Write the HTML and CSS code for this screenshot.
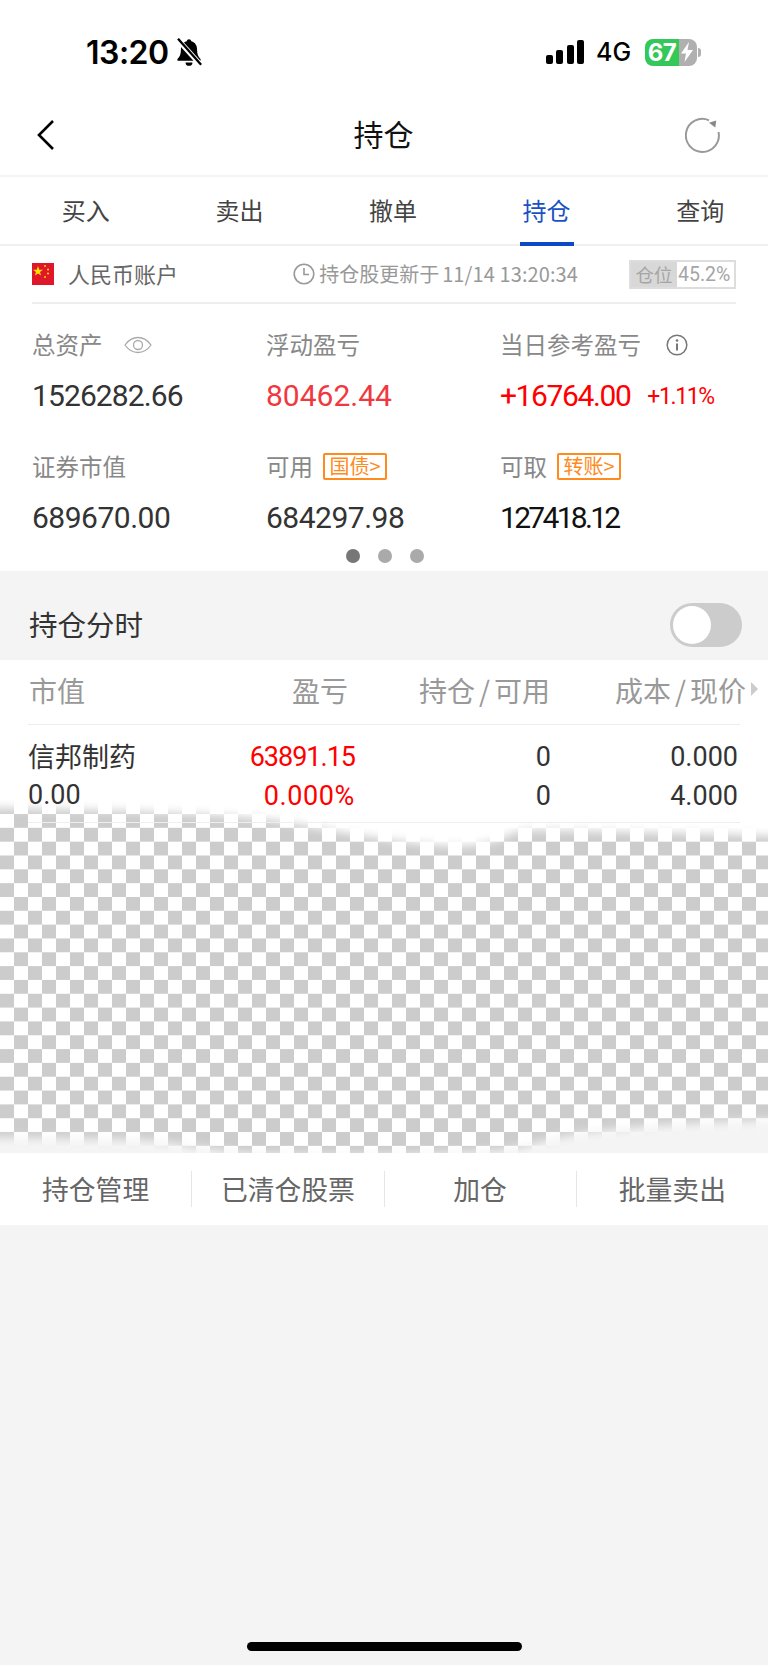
FILE: index.html
```html
<!DOCTYPE html>
<html lang="zh-CN">
<head>
  <meta charset="UTF-8">
  <title>持仓</title>
  <link rel="stylesheet" href="styles.css">
</head>
<body>
  <div class="status-bar">
    <div class="status-left">
      <span class="clock">13:20</span>
      <svg class="bell" viewBox="0 0 26 26" width="30" height="30">
        <path d="M13 2c-1 0-1.800.7-2 1.700C7.500 4.700 6 7.500 6 11c0 4-1 6-3 8v1.500h20V19c-2-2-3-4-3-8 0-3.500-1.500-6.300-5-7.300C14.800 2.700 14 2 13 2z" fill="#000"/>
        <path d="M10 22h6a3 3 0 0 1-6 0z" fill="#000"/>
        <path d="M3 2l20 22" stroke="#fff" stroke-width="4.500"/>
        <path d="M3.500 1.500l20 22.500" stroke="#000" stroke-width="2"/>
      </svg>
    </div>
    <div class="status-right">
      <div class="signal"><i class="s1"></i><i class="s2"></i><i class="s3"></i><i class="s4"></i></div>
      <span class="net">4G</span>
      <div class="battery">
        <span class="battery-level">67</span>
        <svg class="bolt" viewBox="0 0 12 20" width="12" height="20"><path d="M8 0L0 11.500h5L3.500 20 12 8H6.500z" fill="#fff"/></svg>
      </div>
      <div class="battery-nub"></div>
    </div>
  </div>

  <div class="nav">
    <div class="nav-side">
      <svg class="back" viewBox="0 0 20 32" width="20" height="32"><path d="M17 2L3 16l14 14" fill="none" stroke="#000" stroke-width="2.600"/></svg>
    </div>
    <div class="nav-title">持仓</div>
    <div class="nav-side nav-side-right">
      <svg class="refresh" viewBox="0 0 36 36" width="36" height="36">
        <path d="M24 3.300A16.500 16.500 0 1 0 33.500 15" fill="none" stroke="#999" stroke-width="2"/>
        <path d="M24 5.700L31.200 3.500 30.300 10.500z" fill="#888"/>
      </svg>
    </div>
  </div>

  <div class="tabs">
    <div class="tab">买入</div>
    <div class="tab">卖出</div>
    <div class="tab">撤单</div>
    <div class="tab active">持仓</div>
    <div class="tab">查询</div>
  </div>

  <div class="account">
    <div class="account-bar">
      <svg class="flag" viewBox="0 0 22 22" width="22" height="22">
        <rect width="22" height="22" fill="#e0162b"/>
        <polygon points="6,3 7.300,6.700 11,6.700 8,9 9.100,12.500 6,10.400 2.900,12.500 4,9 1,6.700 4.700,6.700" fill="#ffde00"/>
        <circle cx="13" cy="3" r="1" fill="#ffde00"/>
        <circle cx="16" cy="6.500" r="1" fill="#ffde00"/>
        <circle cx="16" cy="10.500" r="1" fill="#ffde00"/>
        <circle cx="13" cy="14" r="1" fill="#ffde00"/>
      </svg>
      <span class="account-name">人民币账户</span>
      <svg class="clock-icon" viewBox="0 0 22 22" width="22" height="22">
        <circle cx="11" cy="11" r="9.800" fill="none" stroke="#999" stroke-width="1.600"/>
        <path d="M11 5v6.500h5" fill="none" stroke="#999" stroke-width="1.600"/>
      </svg>
      <span class="updated">持仓股更新于<span class="updated-time">11/14 13:20:34</span></span>
      <div class="ratio"><span class="ratio-fill">仓位</span><span class="ratio-num">45.2%</span></div>
    </div>

    <div class="stats">
      <div class="stat">
        <div class="stat-label">总资产
          <svg class="eye" viewBox="0 0 28 18" width="28" height="18">
            <path d="M1 9c3.500-5 8-7.500 13-7.500S23.500 4 27 9c-3.500 5-8 7.500-13 7.500S4.500 14 1 9z" fill="none" stroke="#aaa" stroke-width="1.300"/>
            <circle cx="14" cy="9" r="4.500" fill="none" stroke="#aaa" stroke-width="1.300"/>
          </svg>
        </div>
        <div class="stat-value tight-1">1526282.66</div>
      </div>
      <div class="stat">
        <div class="stat-label">浮动盈亏</div>
        <div class="stat-value up-soft">80462.44</div>
      </div>
      <div class="stat">
        <div class="stat-label">当日参考盈亏
          <svg class="info" viewBox="0 0 22 22" width="22" height="22">
            <circle cx="11" cy="11" r="9.800" fill="none" stroke="#777" stroke-width="1.500"/>
            <circle cx="11" cy="6.500" r="1.300" fill="#777"/>
            <path d="M11 9.500v7" stroke="#777" stroke-width="2"/>
          </svg>
        </div>
        <div class="stat-value up">+16764.00<span class="stat-pct">+1.11%</span></div>
      </div>
      <div class="stat">
        <div class="stat-label">证券市值</div>
        <div class="stat-value">689670.00</div>
      </div>
      <div class="stat">
        <div class="stat-label">可用<span class="tag">国债&gt;</span></div>
        <div class="stat-value">684297.98</div>
      </div>
      <div class="stat">
        <div class="stat-label">可取<span class="tag">转账&gt;</span></div>
        <div class="stat-value dark tight-2">127418.12</div>
      </div>
    </div>

    <div class="dots"><i class="dot on"></i><i class="dot"></i><i class="dot"></i></div>
  </div>

  <div class="chart-row">
    <span class="chart-title">持仓分时</span>
    <div class="toggle"><div class="knob"></div></div>
  </div>

  <div class="sheet">
    <svg class="sheet-mask" viewBox="0 0 768 493" width="768" height="493">
      <defs><filter id="soft" x="-5%" y="-20%" width="110%" height="140%"><feGaussianBlur stdDeviation="5"/></filter></defs>
      <path d="M-20 -20H788V176L768 176C700 173 600 172 540 170C525 170 520 172 515 172C500 180 490 184 465 186C440 186 420 184 392 180C360 176 340 172 318 168C300 165 290 162 270 160C200 152 100 150 -20 148Z" fill="#fff" filter="url(#soft)"/>
      <path d="M-20 477L147 480C180 484 210 490 245 493C320 496 420 496 490 491C510 490 525 486 539 482C555 478 570 475 588 472C605 470 620 468 637 467C680 464 730 461 788 459V520H-20Z" fill="#f4f4f4" filter="url(#soft)"/>
    </svg>
    <div class="table">
      <div class="thead">
        <div class="col-name">市值</div>
        <div class="col-pl">盈亏</div>
        <div class="col-qty">持仓<span class="slash">/</span>可用</div>
        <div class="col-cost">成本<span class="slash">/</span>现价<i class="sort-arrow"></i></div>
      </div>
      <div class="trow">
        <div class="col-name"><div class="stock-name">信邦制药</div><div class="num">0.00</div></div>
        <div class="col-pl"><div class="num num-tight">63891.15</div><div class="num num-wide">0.000%</div></div>
        <div class="col-qty"><div class="num">0</div><div class="num">0</div></div>
        <div class="col-cost"><div class="num">0.000</div><div class="num">4.000</div></div>
      </div>
    </div>
  </div>

  <div class="actions">
    <div class="action">持仓管理</div>
    <div class="action">已清仓股票</div>
    <div class="action">加仓</div>
    <div class="action">批量卖出</div>
  </div>

  <div class="home-bar"></div>
</body>
</html>
```

FILE: styles.css
```css
* {
  box-sizing: border-box;
}
body {
  margin: 0;
  width: 768px;
  height: 1665px;
  overflow: hidden;
  position: relative;
  background: #f4f4f4;
  font-family: "Noto Sans CJK SC", "Roboto", sans-serif;
  color: #333;
}
.status-bar {
  height: 104px;
  background: #fff;
  display: flex;
  justify-content: space-between;
  padding: 36px 67px 0 86px;
}
.status-left,
.status-right {
  display: flex;
  align-items: center;
  height: 32px;
}
.clock {
  font-family: "Inter", sans-serif;
  font-weight: 600;
  font-size: 32px;
  letter-spacing: -0.5px;
  color: #000;
}
.bell {
  margin-left: 5px;
}
.signal {
  display: flex;
  align-items: flex-end;
  gap: 3.5px;
  height: 24px;
}
.signal i {
  width: 7px;
  border-radius: 2px;
  background: #000;
}
.s1 { height: 9px; }
.s2 { height: 14px; }
.s3 { height: 19px; }
.s4 { height: 24px; }
.net {
  font-family: "Inter", sans-serif;
  font-size: 25px;
  font-weight: 500;
  color: #000;
  margin-left: 12px;
  width: 49px;
}
.battery {
  width: 52px;
  height: 27px;
  border-radius: 8px;
  background: linear-gradient(90deg, #34c759 0 34px, #b0b0b0 34px);
  display: flex;
  align-items: center;
}
.battery-level {
  font-family: "Inter", sans-serif;
  font-size: 24px;
  font-weight: 700;
  color: #fff;
  width: 34px;
  text-align: center;
  letter-spacing: -0.5px;
}
.bolt {
  margin-left: 2px;
}
.battery-nub {
  width: 3px;
  height: 9px;
  margin-left: 1px;
  border-radius: 0 3px 3px 0;
  background: #b0b0b0;
}

.nav {
  height: 73px;
  background: #fff;
  display: grid;
  grid-template-columns: 1fr auto 1fr;
  align-items: center;
  padding: 0 47px 10px 36px;
  border-bottom: 2px solid #f4f4f4;
}
.nav-side {
  display: flex;
}
.nav-side-right {
  justify-content: flex-end;
}
.nav-title {
  font-size: 30px;
  color: #111;
  padding-left: 10px;
  margin-bottom: 4px;
}
.tabs {
  height: 69px;
  background: #fff;
  display: flex;
  padding-left: 9px;
  border-bottom: 2px solid #f0f0f0;
}
.tab {
  flex: none;
  width: 153.600px;
  display: flex;
  align-items: center;
  justify-content: center;
  padding-bottom: 3px;
  font-size: 24px;
  color: #444;
  position: relative;
}
.tab.active {
  color: #1a52c4;
}
.tab.active::after {
  content: "";
  position: absolute;
  left: 50%;
  bottom: -2px;
  width: 54px;
  height: 4px;
  margin-left: -27px;
  background: #0b49c6;
}

.account {
  background: #fff;
  height: 325px;
  padding: 0 32px;
}
.account-bar {
  height: 58px;
  display: flex;
  align-items: center;
  border-bottom: 2px solid #eee;
}
.account-name {
  margin-left: 14px;
  padding-bottom: 2px;
  font-size: 22px;
  color: #666;
  flex: 1;
}
.clock-icon {
  margin-right: 4px;
}
.updated {
  padding-bottom: 2px;
  font-size: 20px;
  color: #999;
  margin-right: 51px;
}
.updated-time {
  margin-left: 3px;
  font-size: 20px;
  letter-spacing: 0.1px;
}
.ratio {
  width: 107px;
  height: 29px;
  display: flex;
  align-items: center;
  border: 2px solid #ddd;
  font-size: 18.500px;
  color: #a5a5a5;
  white-space: nowrap;
}
.ratio-fill {
  width: 46px;
  height: 100%;
  background: #d8d8d8;
  display: flex;
  align-items: center;
  justify-content: center;
}
.ratio-num {
  margin-left: 1px;
  font-family: "Roboto", sans-serif;
  font-size: 19.500px;
}

.stats {
  display: grid;
  grid-template-columns: 234px 234px 1fr;
  grid-auto-rows: 122px;
  padding-top: 26px;
  height: 255px;
}
.stat-label {
  display: flex;
  align-items: center;
  height: 28px;
  font-size: 23.500px;
  color: #888;
  white-space: nowrap;
}
.eye {
  margin: 2px 0 0 21px;
}
.info {
  margin: 2px 0 0 25px;
}
.tag {
  margin-left: 10px;
  width: 64px;
  height: 27px;
  border: 2px solid #ff8a1e;
  border-radius: 2px;
  color: #ff8a1e;
  font-size: 20px;
  line-height: 22px;
  text-align: center;
}
.stat-value {
  margin-top: 21px;
  font-family: "Roboto", sans-serif;
  font-size: 30px;
  line-height: 34px;
  letter-spacing: -0.5px;
  color: #333;
  white-space: nowrap;
}
.stat-value.tight-1 {
  letter-spacing: -0.9px;
}
.stat-value.tight-2 {
  letter-spacing: -2.700px;
}
.stat-value.dark {
  color: #111;
}
.stat-value.up-soft {
  color: #f0393f;
  letter-spacing: 0;
}
.stat-value.up {
  color: #f00;
  letter-spacing: -1.400px;
}
.stat-pct {
  margin-left: 17px;
  font-size: 23px;
  letter-spacing: -1.400px;
  vertical-align: 2px;
}
.dots {
  display: flex;
  justify-content: center;
  gap: 18px;
  padding-left: 2px;
  margin-top: -10px;
}
.dot {
  width: 14px;
  height: 14px;
  border-radius: 50%;
  background: #aaa;
}
.dot.on {
  background: #777;
}

.chart-row {
  height: 89px;
  display: flex;
  align-items: center;
  justify-content: space-between;
  padding: 20px 26px 0 29px;
  font-size: 28.500px;
  color: #333;
}
.chart-title {
  padding-bottom: 4px;
}
.toggle {
  width: 72px;
  height: 44px;
  margin-bottom: 1px;
  border-radius: 22px;
  background: #ccc;
  padding: 3px;
}
.knob {
  width: 38px;
  height: 38px;
  border-radius: 50%;
  background: #fff;
}

.sheet {
  height: 493px;
  position: relative;
  background-color: #fff;
  background-image: conic-gradient(#ccc 25%, #fff 0 50%, #ccc 0 75%, #fff 0);
  background-size: 28px 27.660px;
  background-position: 0 154px;
}
.sheet-mask {
  position: absolute;
  left: 0;
  top: 0;
}
.table {
  position: relative;
  padding: 0 28px;
}
.thead,
.trow {
  display: flex;
  border-bottom: 1px solid #eee;
  white-space: nowrap;
}
.thead {
  height: 65px;
  align-items: center;
  font-size: 28px;
  color: #999;
  padding: 0 0 4px 1px;
}
.trow {
  height: 98px;
  padding-top: 13px;
  font-family: "Roboto", sans-serif;
  font-size: 27px;
}
.trow .num {
  height: 38px;
  line-height: 38px;
}
.trow .num + .num {
  margin-top: 1px;
}
.trow .num-tight {
  letter-spacing: -1px;
}
.trow .num-wide {
  letter-spacing: 0.6px;
}
.stock-name {
  height: 38px;
  line-height: 36px;
  font-family: "Noto Sans CJK SC", sans-serif;
  font-size: 27px;
  color: #333;
}
.slash {
  margin: 0 4px;
}
.col-name {
  flex: none;
  width: 150px;
}
.col-pl {
  flex: none;
  width: 177px;
  text-align: right;
}
.col-qty {
  flex: none;
  width: 194px;
  text-align: right;
}
.col-cost {
  flex: none;
  width: 189px;
  text-align: right;
}
.trow .col-qty {
  width: 196px;
}
.trow .col-cost {
  width: 187px;
}
.trow .col-pl {
  color: #f00;
}
.thead .col-pl {
  padding-right: 8px;
}
.thead .col-cost {
  position: relative;
  margin-left: 7px;
}
.sort-arrow {
  position: absolute;
  right: -12px;
  top: 12px;
  border-left: 7px solid #ccc;
  border-top: 7px solid transparent;
  border-bottom: 7px solid transparent;
}

.actions {
  height: 72px;
  background: #fff;
  display: flex;
  align-items: center;
}
.action {
  flex: 1;
  height: 36px;
  display: flex;
  align-items: center;
  justify-content: center;
  padding-bottom: 2px;
  font-size: 26.800px;
  color: #666;
  border-right: 1px solid #e6e6e6;
}
.action:last-child {
  border-right: none;
}

.home-bar {
  position: absolute;
  left: 247px;
  bottom: 14px;
  width: 275px;
  height: 9px;
  border-radius: 5px;
  background: #000;
}
```
